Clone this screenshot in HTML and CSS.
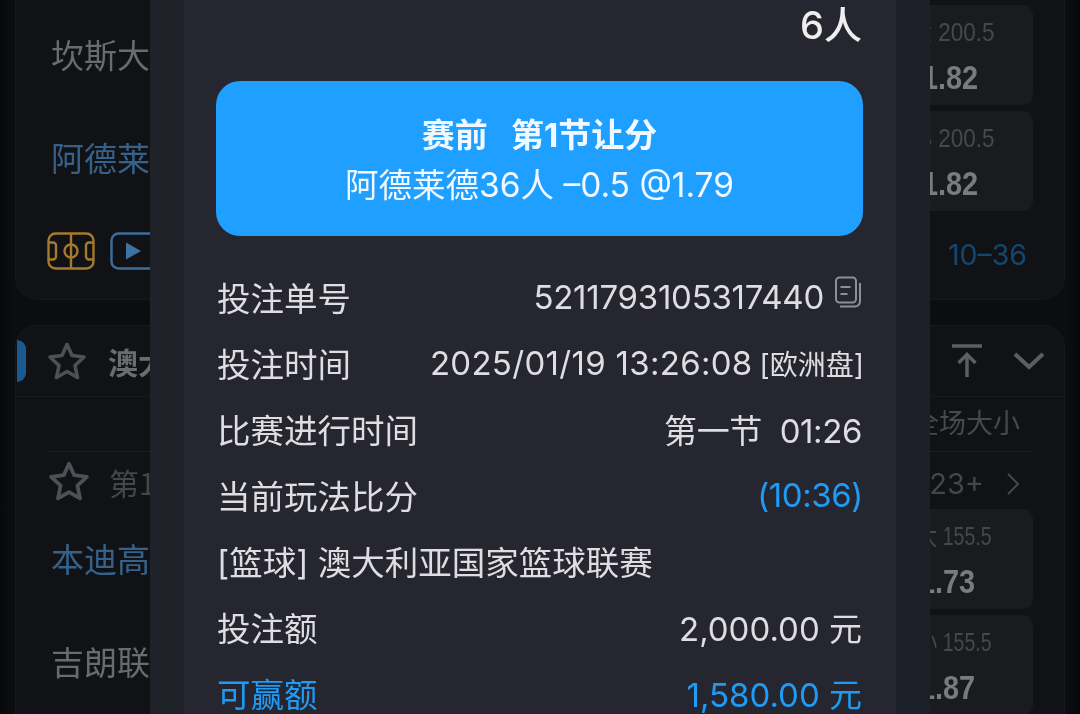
FILE: index.html
```html
<!DOCTYPE html>
<html lang="zh-CN">
<head>
<meta charset="utf-8">
<title>注单详情</title>
<link rel="stylesheet" href="styles.css">
</head>
<body>
<div class="page">
  <section class="card card-one">
    <div class="match">
      <div class="team">坎斯大班</div>
      <div class="odds"><div class="line">大 200.5</div><div class="price">1.82</div></div>
      <div class="team team-blue">阿德莱德36人</div>
      <div class="odds"><div class="line">小 200.5</div><div class="price">1.82</div></div>
    </div>
    <div class="card-foot">
      <div class="foot-icons">
        <svg class="icon-field" viewBox="0 0 48 38" fill="none" stroke="#a57a2c" stroke-width="2.400">
          <rect x="1.500" y="1.500" width="45" height="35" rx="7"/>
          <path d="M24 1.500v35"/>
          <circle cx="24" cy="19" r="6.500"/>
          <path d="M1.500 10.500h4.500a3 3 0 0 1 3 3v11a3 3 0 0 1-3 3H1.500M46.500 10.500H42a3 3 0 0 0-3 3v11a3 3 0 0 0 3 3h4.500"/>
        </svg>
        <svg class="icon-play" viewBox="0 0 48 38" fill="none">
          <rect x="1.500" y="1.500" width="45" height="35" rx="7" stroke="#3d6d9b" stroke-width="2.400"/>
          <path d="M16 10.500 31 19 16 27.500Z" fill="#3f739f"/>
        </svg>
      </div>
      <div class="foot-score">10–36</div>
    </div>
  </section>

  <section class="card card-two">
    <header class="league">
      <span class="tab"></span>
      <svg class="star" viewBox="0 0 40 40" fill="none" stroke="#4e5055" stroke-width="3.600" stroke-linejoin="round"><path d="M20 3.500 25 14.500 37 16 28 24.500 30.500 36.500 20 30.500 9.500 36.500 12 24.500 3 16 15 14.500Z"/></svg>
      <span class="league-name">澳大利亚国家篮球联赛</span>
      <svg class="to-top" viewBox="0 0 32 34" fill="none" stroke="#5c5e62" stroke-width="3.500"><path d="M1 2h30M16 33V11M7.500 19 16 10.500 24.500 19"/></svg>
      <svg class="chev-down" viewBox="0 0 32 20" fill="none" stroke="#5c5e62" stroke-width="4"><path d="M2 3 16 16 30 3"/></svg>
    </header>
    <div class="market-name">全场大小</div>
    <div class="game-row">
      <svg class="star star-row" viewBox="0 0 40 40" fill="none" stroke="#4e5055" stroke-width="3.600" stroke-linejoin="round"><path d="M20 3.500 25 14.500 37 16 28 24.500 30.500 36.500 20 30.500 9.500 36.500 12 24.500 3 16 15 14.500Z"/></svg>
      <span class="period">第1节</span>
      <span class="more">23+</span>
      <svg class="chev-right" viewBox="0 0 14 24" fill="none" stroke="#46474c" stroke-width="2"><path d="M2 2 12 12 2 22"/></svg>
    </div>
    <div class="match">
      <div class="team team-blue">本迪高精神</div>
      <div class="odds"><div class="line">大 155.5</div><div class="price">1.73</div></div>
      <div class="team">吉朗联</div>
      <div class="odds"><div class="line">小 155.5</div><div class="price">1.87</div></div>
    </div>
  </section>

  <aside class="modal">
    <div class="modal-body">
      <div class="team-top">6人</div>
      <div class="bet-banner">
        <div class="bet-title">赛前&nbsp;&nbsp;&nbsp;第1节让分</div>
        <div class="bet-sub">阿德莱德36人 –0.5 @1.79</div>
      </div>
      <div class="rows">
        <div class="row"><span>投注单号</span><span class="value serial">5211793105317440<svg class="copy" viewBox="0 0 28 32" fill="none" stroke="#8d8f96" stroke-width="2"><rect x="2" y="1.500" width="20" height="25" rx="3.500"/><path d="M6.500 11h10M6.500 18h7M6 30.500h15a5 5 0 0 0 5-5V7"/></svg></span></div>
        <div class="row"><span>投注时间</span><span class="value time">2025/01/19 13:26:08 <small>[欧洲盘]</small></span></div>
        <div class="row"><span>比赛进行时间</span><span class="value tight">第一节&nbsp;&nbsp;01:26</span></div>
        <div class="row"><span>当前玩法比分</span><span class="value tight blue score">(10:36)</span></div>
        <div class="row"><span class="league-line">[篮球] 澳大利亚国家篮球联赛</span></div>
        <div class="row"><span>投注额</span><span class="value">2,000.00 元</span></div>
        <div class="row blue"><span>可赢额</span><span class="value">1,580.00 元</span></div>
      </div>
    </div>
  </aside>
</div>
</body>
</html>
```
FILE: styles.css
```css
* { box-sizing: border-box; }
html, body { margin: 0; padding: 0; }
body {
  width: 1080px;
  height: 714px;
  overflow: hidden;
  background: #0b0c0f;
  font-family: Inter, "Noto Sans CJK SC", sans-serif;
}
.page {
  position: relative;
  width: 1080px;
  height: 714px;
  overflow: hidden;
  padding: 0 15px;
  display: flex;
  flex-direction: column;
  gap: 25px;
  background: linear-gradient(90deg, #08090b 0, #0c0d10 15px, #0c0d10 1065px, #07080a 1080px);
  filter: blur(0.45px);
}
.card {
  background: #111216;
  border: 1px solid #17181c;
  flex: none;
}
.card-one {
  height: 300px;
  border-top: 0;
  border-radius: 0 0 22px 22px;
  padding: 5px 31px 0 31px;
  display: flex;
  flex-direction: column;
}
.card-two {
  height: 420px;
  border-radius: 22px 22px 0 0;
  padding: 0 31px;
}
.match {
  display: grid;
  grid-template-columns: 1fr 153px;
  grid-auto-rows: 100px;
  row-gap: 6px;
  align-items: center;
}
.team {
  font-family: "Noto Sans CJK SC", sans-serif;
  font-size: 33px;
  color: #6a6b6d;
  padding: 0 0 3px 4px;
  line-height: 40px;
  white-space: nowrap;
}
.team:nth-child(3) { padding-bottom: 9px; }
.team-blue { color: #35618a; }
.odds {
  height: 100px;
  background: #1a1b1f;
  border-radius: 10px;
  display: flex;
  flex-direction: column;
  align-items: flex-end;
  padding-top: 12px;
}
.line {
  font-family: "Liberation Sans", "Noto Sans CJK SC", sans-serif;
  font-size: 25px;
  line-height: 30px;
  color: #47484c;
  margin-right: 38px;
  transform: scaleX(0.9);
  transform-origin: right center;
}
.price {
  font-family: "Liberation Sans", sans-serif;
  font-weight: 700;
  font-size: 34px;
  line-height: 44px;
  color: #7a7b7e;
  margin: 8px 55px 0 0;
  transform: scaleX(0.85);
  transform-origin: right center;
}
.card-two .line { margin-right: 41px; transform: scaleX(0.78); }
.card-two .price { margin-right: 58px; }
.card-foot {
  flex: 1;
  display: flex;
  justify-content: space-between;
  align-items: center;
  padding: 0 6px 8px 0;
}
.foot-icons { display: flex; gap: 15px; }
.icon-field, .icon-play { width: 48px; height: 38px; display: block; }
.foot-score {
  font-family: Inter, sans-serif;
  font-size: 28.500px;
  color: #14476f;
  margin-top: 6px;
}
.league {
  position: relative;
  height: 71px;
  margin: 0 -31px;
  padding: 0 19px 0 31px;
  display: flex;
  align-items: center;
  border-bottom: 1px solid #191a1e;
}
.tab {
  position: absolute;
  left: 1px;
  top: 14px;
  width: 9px;
  height: 42px;
  background: #1a5a90;
  border-radius: 0 10px 10px 0;
}
.star { width: 40px; height: 40px; flex: none; }
.league-name {
  font-family: "Noto Sans CJK SC", sans-serif;
  font-weight: 700;
  font-size: 30px;
  color: #6b6c6e;
  margin-left: 21px;
  flex: 1;
}
.to-top { width: 32px; height: 34px; margin-right: 30px; }
.chev-down { width: 32px; height: 20px; }
.market-name {
  height: 55px;
  border-bottom: 1px solid #1c1d21;
  text-align: right;
  font-family: "Noto Sans CJK SC", sans-serif;
  font-size: 27px;
  line-height: 50px;
  color: #48494d;
  padding-right: 13px;
}
.game-row {
  height: 57px;
  display: flex;
  align-items: center;
}
.star-row { margin-left: 1px; width: 42px; height: 42px; }
.period {
  font-family: "Noto Sans CJK SC", sans-serif;
  font-size: 30px;
  color: #45464a;
  margin: 2px 0 0 19px;
  flex: 1;
}
.more {
  font-family: Inter, sans-serif;
  font-size: 29px;
  color: #45464a;
  margin-top: 6px;
}
.chev-right { width: 14px; height: 24px; margin: 6px 13px 0 22px; }
.modal {
  position: absolute;
  left: 150px;
  top: 0;
  width: 780px;
  height: 714px;
  padding: 0 34px;
  background: linear-gradient(90deg, #20222a, #1e2029);
}
.modal-body {
  height: 100%;
  background: #25262f;
  padding: 0 34px 0 33px;
  color: #dedee2;
  font-family: Inter, "Noto Sans CJK SC", sans-serif;
}
.team-top {
  height: 81px;
  text-align: right;
  font-size: 38px;
  line-height: 50px;
  font-weight: 500;
  color: #eeeeef;
}
.bet-banner {
  height: 155px;
  margin: 0 -1px;
  background: #1f9fff;
  border-radius: 24px;
  color: #f2f8ff;
  text-align: center;
  padding-top: 31px;
}
.bet-title { font-size: 33px; font-weight: 700; line-height: 46px; }
.bet-sub { font-size: 33.500px; line-height: 54px; }
.rows { padding-top: 30px; }
.row {
  height: 66px;
  display: flex;
  justify-content: space-between;
  align-items: center;
  font-size: 33px;
  white-space: nowrap;
  padding-bottom: 6px;
}
.row > span:first-child { font-size: 33.500px; }
.row > .league-line { font-size: 32.500px; }
.value { display: flex; align-items: center; gap: 10px; padding-top: 2px; }
.serial { letter-spacing: -0.25px; }
.time { letter-spacing: 0.3px; gap: 7px; }
.tight { letter-spacing: -0.4px; }
.score { margin-right: -1px; }
.value small { font-size: 28px; letter-spacing: 0; margin-right: -2px; }
.blue { color: #1f9bf5; }
.copy { width: 28px; height: 32px; margin-top: -10px; }
```
